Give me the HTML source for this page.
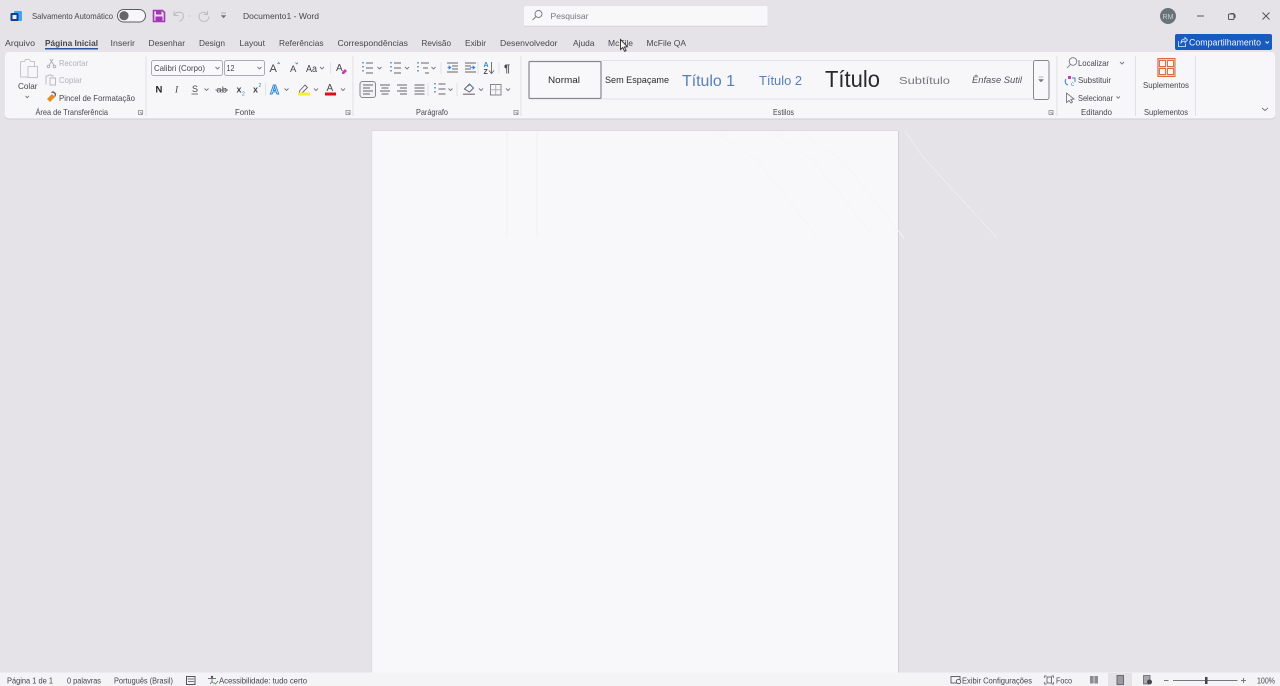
<!DOCTYPE html>
<html lang="pt-BR"><head><meta charset="utf-8"><title>Documento1 - Word</title>
<style>
html,body{margin:0;padding:0;background:#e6e3e8;overflow:hidden}
svg{display:block}
text{font-family:"Liberation Sans",sans-serif;font-size:8.5px;fill:#47464b}
.g{fill:#b3b1b6}
.n{fill:none;stroke:#77767b;stroke-width:.9}
.l{fill:none;stroke:#66656a;stroke-width:.9}
.b{fill:none;stroke:#2f86d0;stroke-width:1.4;stroke-dasharray:1.5 2.5}
.s{stroke:#e2e0e4;stroke-width:1;fill:none}
</style></head><body>
<svg xmlns="http://www.w3.org/2000/svg" width="1280" height="686" viewBox="0 0 1280 686">
<rect width="1280" height="686" fill="#e6e3e8"/>

<!-- title bar -->
<rect x="14" y="11" width="8" height="10" rx="1" fill="#41a5ee"/>
<rect x="10.500" y="13" width="8" height="8" rx="1" fill="#103f91"/>
<rect x="12.500" y="15" width="4" height="4" fill="#f0f0f5"/>
<text x="32" y="19" textLength="81" lengthAdjust="spacingAndGlyphs">Salvamento Automático</text>
<rect x="117.500" y="9.500" width="28" height="12.500" rx="6.200" fill="#f7f6f9" stroke="#5c5b60"/>
<circle cx="124" cy="15.700" r="4.600" fill="#66656a"/>
<path d="M153.500 10.500h9l2 2v9h-11z" fill="none" stroke="#a436b5" stroke-width="1.600"/>
<rect x="156" y="11" width="5.500" height="3.500" fill="#a436b5"/><rect x="155.500" y="16.500" width="7" height="4.500" fill="#a436b5"/>
<path d="M174 11v4.500h4.500M174.500 15c2-4 9-4 9 1 0 2.500-2 4.500-4 5.500" fill="none" stroke="#bdbbc0" stroke-width="1"/>
<path d="M188 16h3" stroke="#cfcdd2" stroke-width="1"/>
<path d="M207.500 11v3.500h-4M207 14c-2.500-3-8-2-8 2.500 0 3 2.500 5 5 5s5-2 5-5" fill="none" stroke="#bdbbc0" stroke-width="1"/>
<path d="M221 13h5M221 15.500l2.500 2.500 2.500-2.500z" fill="#77767b" stroke="#77767b" stroke-width=".5"/>
<text x="243" y="19" textLength="76" lengthAdjust="spacingAndGlyphs">Documento1  -  Word</text>

<!-- search -->
<rect x="524" y="6" width="243.500" height="20" rx="2" fill="#f8f7fa"/>
<path d="M524 26.200h243" stroke="#d5d3d8"/>
<circle cx="538.500" cy="14" r="3.500" class="n"/><path d="M536 16.500l-3.500 3.500" class="n"/>
<text x="550.500" y="19" textLength="38" lengthAdjust="spacingAndGlyphs" style="fill:#77767b">Pesquisar</text>

<!-- window controls -->
<circle cx="1168" cy="16" r="8" fill="#68737a"/>
<text x="1162.500" y="18.800" textLength="11" lengthAdjust="spacingAndGlyphs" style="font-size:7.500px;fill:#c9d0d4">RM</text>
<path d="M1197 16h7" stroke="#55545a"/>
<rect x="1228.500" y="14" width="5.500" height="5.500" rx="1" fill="none" stroke="#55545a"/>
<path d="M1230.500 13.500h3l1.500 1.500v3" fill="none" stroke="#55545a"/>
<path d="M1262.500 12.500l7 7M1269.500 12.500l-7 7" stroke="#55545a"/>

<!-- tabs -->
<g style="font-size:9px">
<text x="5" y="46" textLength="30" lengthAdjust="spacingAndGlyphs">Arquivo</text>
<text x="45" y="46" textLength="53" lengthAdjust="spacingAndGlyphs" style="font-weight:bold">Página Inicial</text>
<text x="110.500" y="46" textLength="24.500" lengthAdjust="spacingAndGlyphs">Inserir</text>
<text x="148.500" y="46" textLength="36.500" lengthAdjust="spacingAndGlyphs">Desenhar</text>
<text x="199" y="46" textLength="26" lengthAdjust="spacingAndGlyphs">Design</text>
<text x="239.500" y="46" textLength="25.500" lengthAdjust="spacingAndGlyphs">Layout</text>
<text x="279" y="46" textLength="44.500" lengthAdjust="spacingAndGlyphs">Referências</text>
<text x="337.500" y="46" textLength="70.500" lengthAdjust="spacingAndGlyphs">Correspondências</text>
<text x="421.500" y="46" textLength="29.500" lengthAdjust="spacingAndGlyphs">Revisão</text>
<text x="465" y="46" textLength="21" lengthAdjust="spacingAndGlyphs">Exibir</text>
<text x="500" y="46" textLength="57.500" lengthAdjust="spacingAndGlyphs">Desenvolvedor</text>
<text x="573" y="46" textLength="21.500" lengthAdjust="spacingAndGlyphs">Ajuda</text>
<text x="608" y="46" textLength="25" lengthAdjust="spacingAndGlyphs">McFile</text>
<text x="646.500" y="46" textLength="39.500" lengthAdjust="spacingAndGlyphs">McFile QA</text>
</g>
<rect x="45" y="48" width="53" height="1.500" fill="#2b579a"/>

<!-- share -->
<rect x="1175" y="34" width="97" height="16" rx="2" fill="#185abd"/>
<path d="M1178.500 41v5.500h7v-3M1181 43c0-3 2-4 4-4v-1.500l2.500 2.500-2.500 2.500V41c-1.500 0-3 .5-4 2z" fill="none" stroke="#e6edf8" stroke-width=".8"/>
<text x="1189" y="45.500" textLength="72" lengthAdjust="spacingAndGlyphs" style="font-size:9px;fill:#f0f3fa">Compartilhamento</text>
<path d="M1265.500 41.500l1.700 1.700 1.700-1.700" fill="none" stroke="#f0f3fa"/>

<!-- ribbon -->
<rect x="5" y="53" width="1270" height="66.500" rx="4" fill="#cfcdd2"/>
<rect x="5" y="52" width="1270" height="66.500" rx="4" fill="#f7f6f9"/>
<path d="M146 56v60M353 56v60M521 56v60M1057 56v60M1135.500 56v60M1195.500 56v60" class="s"/>
<path d="M330.500 62v12M265.500 83v13" class="s"/>
<path d="M441 62v12M478 62v12M499 62v12M428 83v13M457 83v13" class="s"/>

<!-- clipboard -->
<path d="M20.500 61.500h4l1-2h4l1 2h4v5M20.500 61.500v15.500h7" fill="none" stroke="#c6c4c9"/>
<rect x="28" y="66.500" width="9.500" height="11" fill="#f7f6f9" stroke="#c6c4c9"/>
<text x="18" y="89" textLength="19.500" lengthAdjust="spacingAndGlyphs">Colar</text>
<path d="M25.500 96l1.700 1.700 1.700-1.700" class="n"/>
<path d="M50 59l4 6.500M53 59l-4 6.500" stroke="#b3b1b6" fill="none"/><circle cx="48.500" cy="66.500" r="1.300" fill="none" stroke="#b3b1b6"/><circle cx="54.500" cy="66.500" r="1.300" fill="none" stroke="#b3b1b6"/>
<text class="g" x="59" y="66" textLength="29" lengthAdjust="spacingAndGlyphs">Recortar</text>
<path d="M46 84.500V76h2l1-1h2l1 1h2" fill="none" stroke="#bdbbc0"/><rect x="50" y="78" width="5.500" height="7" fill="none" stroke="#bdbbc0"/>
<text class="g" x="59" y="83" textLength="23" lengthAdjust="spacingAndGlyphs">Copiar</text>
<path d="M47 99l5-5 3 3-5 5z" fill="#e58b1f"/><path d="M51.500 92.500l2-.5 2 2-.5 2.500" fill="none" stroke="#5c5b60" stroke-width="1.300"/>
<text x="59" y="101" textLength="76" lengthAdjust="spacingAndGlyphs">Pincel de Formatação</text>
<text x="35.500" y="115" textLength="72.500" lengthAdjust="spacingAndGlyphs">Área de Transferência</text>
<path d="M138.500 110.500h4v4h-4zM140 112l2.500 2.500M142.500 112.500v2h-2" fill="none" stroke="#88878c" stroke-width=".8"/>
<path d="M346 110.500h4v4h-4zM347.500 112l2.500 2.500M350 112.500v2h-2" fill="none" stroke="#88878c" stroke-width=".8"/>
<path d="M514 110.500h4v4h-4zM515.500 112l2.500 2.500M518 112.500v2h-2" fill="none" stroke="#88878c" stroke-width=".8"/>
<path d="M1049 110.500h4v4h-4zM1050.500 112l2.500 2.500M1053 112.500v2h-2" fill="none" stroke="#88878c" stroke-width=".8"/>

<!-- font -->
<rect x="151.500" y="60.500" width="71" height="15" rx="2" fill="#f9f8fb" stroke="#aeacb2"/>
<rect x="224.500" y="60.500" width="40" height="15" rx="2" fill="#f9f8fb" stroke="#aeacb2"/>
<text x="154" y="71" textLength="51" lengthAdjust="spacingAndGlyphs">Calibri (Corpo)</text>
<text x="226.500" y="71" textLength="8" lengthAdjust="spacingAndGlyphs">12</text>
<text x="269.500" y="72" style="font-size:11px">A</text><path d="M277.500 64l1.200-1.500 1.200 1.500" fill="none" stroke="#2f86d0" stroke-width=".8"/>
<text x="290" y="72" style="font-size:9.500px">A</text><path d="M295.500 62.500l1.200 1.500 1.200-1.500" fill="none" stroke="#2f86d0" stroke-width=".8"/>
<text x="306" y="72" textLength="11" lengthAdjust="spacingAndGlyphs" style="font-size:10px">Aa</text>
<text x="336" y="71" style="font-size:10px">A</text><path d="M342 72l3-3 2 2-3 3h-2z" fill="#c33fb0"/>
<text x="155.500" y="92.500" style="font-weight:bold;font-size:9.500px;fill:#222">N</text>
<text x="175" y="92.500" style="font-style:italic;font-size:9.500px;font-family:'Liberation Serif',serif">I</text>
<text x="192" y="92" style="font-size:9px">S</text><path d="M191.500 94h6.500" stroke="#77767b"/>
<text x="216.500" y="92.500" textLength="10.500" lengthAdjust="spacingAndGlyphs" style="font-size:8px">ab</text><path d="M215.500 90h12.500" stroke="#66656a"/>
<text x="236.500" y="92.500" style="font-size:9px;font-weight:bold">x</text><text x="242" y="95.500" style="font-size:5px;fill:#2f86d0">2</text>
<text x="253" y="92.500" style="font-size:9px;font-weight:bold">x</text><text x="258.500" y="87" style="font-size:5px;fill:#2f86d0">2</text>
<text x="270" y="94" style="font-size:12.500px;font-weight:bold;fill:#fff;stroke:#2b88d8;stroke-width:1">A</text>
<path d="M299.500 91l5.500-6 2.500 2.500-5.500 5.500h-2.500z" fill="none" stroke="#66656a" stroke-width=".9"/>
<rect x="298" y="92.500" width="12" height="3" fill="#f8ee2b"/>
<text x="326.500" y="91" style="font-size:10px">A</text><rect x="325" y="92.500" width="11" height="3" fill="#e00c1c"/>

<!-- chevrons -->
<path class="n" d="M215.500 67l2 2 2-2M257.500 67l2 2 2-2M320 67l2 2 2-2M377.500 67l2 2 2-2M405 67l2 2 2-2M431.500 67l2 2 2-2M1120 62l2 2 2-2M204.500 88.500l2 2 2-2M284.500 88.500l2 2 2-2M314 88.500l2 2 2-2M341 88.500l2 2 2-2M448.500 88.500l2 2 2-2M479 88.500l2 2 2-2M506 88.500l2 2 2-2M1116.500 96.500l1.700 1.700 1.700-1.700M1262 108l3 2.500 3-2.500"/>

<!-- paragraph -->
<path class="b" d="M363 62v12M391 62v12M418 62v12M435 83v12"/>
<path class="l" d="M366 63h7M366 68h7M366 73h7M394 63h7M394 68h7M394 73h7M421 63h8M423 68h5M425 73h4M438.500 84h7M438.500 89h7M438.500 94h7"/>
<path class="l" d="M447 63h11M452 66h6M452 69h6M447 72h11M465 63h11M465 66h6M465 69h6M465 72h11"/>
<path d="M447.500 67.500l3 0M451 67.500l-2-1.500v3zM470 67.500h3M475 67.500l-2-1.500v3z" fill="#2f86d0" stroke="#2f86d0" stroke-width=".7"/>
<text x="483.500" y="67" style="font-size:7px;fill:#2f86d0;font-weight:bold">A</text>
<text x="483.500" y="74" style="font-size:7px;font-weight:bold">Z</text>
<path class="l" d="M491.500 62v11M489 70.500l2.500 3 2.500-3"/>
<text x="504" y="72" style="font-size:11px;font-weight:bold">¶</text>
<rect x="360" y="81.500" width="15.500" height="16" rx="2.500" fill="#f3f2f5" stroke="#88878c"/>
<path class="l" d="M363 85h10M363 88h7M363 91h10M363 94h7M380 85h10M381.500 88h7M380 91h10M381.500 94h7M397 85h10M400 88h7M397 91h10M400 94h7M414.500 85h10M414.500 88h10M414.500 91h10M414.500 94h10"/>
<path d="M464.500 89l5-5 4 4-4 4z" fill="none" stroke="#66656a"/><path d="M468 86l2-2" stroke="#2f86d0" stroke-width="1.400"/>
<rect x="463" y="93.500" width="12" height="1.500" fill="#8f8e93"/>
<rect x="490.500" y="84.500" width="10.500" height="10.500" fill="none" stroke="#88878c"/><path d="M495.700 84.500v10.500M490.500 89.700h10.500" stroke="#b3b1b6"/>
<text x="416" y="115" textLength="32" lengthAdjust="spacingAndGlyphs">Parágrafo</text>
<text x="235" y="115" textLength="20" lengthAdjust="spacingAndGlyphs">Fonte</text>

<!-- styles -->
<path d="M601 60.500h432M601 99h432" stroke="#e4e2e7"/>
<rect x="529" y="61.500" width="72" height="37" rx="1" fill="#f8f7fa" stroke="#88878c" stroke-width="1.200"/>
<text x="548" y="83" textLength="32" lengthAdjust="spacingAndGlyphs" style="font-size:9.500px;fill:#2a2a2c">Normal</text>
<text x="605" y="83" textLength="64" lengthAdjust="spacingAndGlyphs" style="font-size:9.500px;fill:#2a2a2c">Sem Espaçame</text>
<text x="682" y="86" textLength="53" lengthAdjust="spacingAndGlyphs" style="font-size:16px;fill:#5580b8">Título 1</text>
<text x="759" y="85" textLength="43" lengthAdjust="spacingAndGlyphs" style="font-size:13px;fill:#5580b8">Título 2</text>
<text x="825" y="87" textLength="55" lengthAdjust="spacingAndGlyphs" style="font-size:23px;fill:#2a2a2c">Título</text>
<text x="899" y="84" textLength="51" lengthAdjust="spacingAndGlyphs" style="font-size:10.500px;fill:#77767b">Subtítulo</text>
<text x="972" y="83" textLength="50" lengthAdjust="spacingAndGlyphs" style="font-size:9.500px;font-style:italic;fill:#55545a">Ênfase Sutil</text>
<rect x="1033.500" y="60.500" width="15.500" height="39" rx="2" fill="#f8f7fa" stroke="#88878c"/>
<path d="M1038.500 77h5M1038.500 79.500l2.500 2.500 2.500-2.500z" fill="#77767b" stroke="#77767b" stroke-width=".5"/>
<text x="773" y="115" textLength="21" lengthAdjust="spacingAndGlyphs">Estilos</text>

<!-- editing -->
<circle cx="1073" cy="61.500" r="3.800" class="n"/><path d="M1070.300 64.500l-3.300 3.500" class="n"/>
<text x="1078" y="66" textLength="31" lengthAdjust="spacingAndGlyphs">Localizar</text>
<rect x="1068" y="76" width="3" height="3" fill="#c33fb0"/>
<path d="M1066 79c-1.500 2-1 5 2 6M1072 78h3v4" fill="none" stroke="#2f86d0"/>
<text x="1071" y="86" style="font-size:6px;fill:#2f86d0">c</text>
<text x="1078" y="83" textLength="33" lengthAdjust="spacingAndGlyphs">Substituir</text>
<path d="M1066.500 93v9.500l2.500-2 2 2.500 1.500-1-1.500-2.500 3-.5z" class="n"/>
<text x="1078" y="101" textLength="35" lengthAdjust="spacingAndGlyphs">Selecionar</text>
<text x="1081" y="115" textLength="31" lengthAdjust="spacingAndGlyphs">Editando</text>

<!-- add-ins -->
<rect x="1157" y="58" width="18.500" height="19" fill="#dddbe0"/>
<rect x="1158" y="58.500" width="17" height="18" fill="none" stroke="#d9683c"/>
<path d="M1159.500 60.500h6v6h-6zM1167.500 60.500h6v6h-6zM1159.500 68.500h6v6h-6zM1167.500 68.500h6v6h-6z" fill="#f7f6f9" stroke="#d9683c" stroke-width=".9"/>
<text x="1143" y="88" textLength="46" lengthAdjust="spacingAndGlyphs">Suplementos</text>
<text x="1144" y="115" textLength="44" lengthAdjust="spacingAndGlyphs">Suplementos</text>

<!-- page -->
<rect x="372" y="130.500" width="526" height="542" fill="#f8f7fa"/>
<path d="M372 130.500h526" stroke="#dcdade"/>
<path d="M898.500 131v542" stroke="#d0ced3"/>
<path d="M371.700 131v542" stroke="#e0dee2"/>
<path d="M507 131v107M537 131v107" stroke="#f0eff2"/>
<path d="M714 131l43 29 61 78M770 131l43 29 62 78M798 131l44 29 62 78" stroke="#f5f4f7" fill="none"/>
<path d="M905 131l17 25 75 82" stroke="#f0eff2" fill="none" stroke-width=".8"/>

<!-- status bar -->
<rect x="0" y="672.500" width="1280" height="13.500" fill="#f4f3f6"/>
<text x="7" y="683.500" textLength="46" lengthAdjust="spacingAndGlyphs" style="font-size:8px">Página 1 de 1</text>
<text x="67" y="683.500" textLength="34" lengthAdjust="spacingAndGlyphs" style="font-size:8px">0 palavras</text>
<text x="114" y="683.500" textLength="59" lengthAdjust="spacingAndGlyphs" style="font-size:8px">Português (Brasil)</text>
<rect x="186.500" y="676.500" width="8.500" height="8" fill="none" stroke="#55545a"/><path d="M187.500 679h6.500M188 681.500h6" stroke="#77767b"/>
<circle cx="212" cy="677" r="1.200" fill="#55545a"/><path d="M208 678.500h8M212 678.500v3l-2 2.500M212 681.500l1.500 2" class="n" stroke-width=".8"/><path d="M214 682.500l1.500 1.500 2.500-3" fill="none" stroke="#4a8a50" stroke-width=".8"/>
<text x="219" y="683.500" textLength="88" lengthAdjust="spacingAndGlyphs" style="font-size:8px">Acessibilidade: tudo certo</text>
<rect x="951" y="676.500" width="9" height="6.500" fill="none" stroke="#55545a" stroke-width=".9"/><circle cx="958.500" cy="681.500" r="2.200" fill="#f4f3f6" stroke="#55545a" stroke-width=".9"/>
<text x="962" y="683.500" textLength="70" lengthAdjust="spacingAndGlyphs" style="font-size:8px">Exibir Configurações</text>
<path d="M1044.500 678v-2h2M1051.500 676h2v2M1053.500 682v2h-2M1046.500 684h-2v-2" class="n" stroke-width=".9"/><rect x="1047" y="677" width="4.500" height="6" fill="none" stroke="#55545a" stroke-width=".8"/>
<text x="1056" y="683.500" textLength="16" lengthAdjust="spacingAndGlyphs" style="font-size:8px">Foco</text>
<rect x="1090" y="676" width="8" height="7.500" fill="#8e8d92"/><path d="M1094 676v7.500" stroke="#f4f3f6" stroke-width=".7"/>
<rect x="1108" y="673" width="24" height="13" fill="#e3e1e5"/>
<rect x="1117" y="675.500" width="6.500" height="9" fill="#9b9a9f" stroke="#55545a" stroke-width=".8"/>
<rect x="1143.500" y="675.500" width="6.500" height="8.500" fill="#a8a7ac" stroke="#66656a" stroke-width=".8"/><circle cx="1149.500" cy="682" r="2.500" fill="#45444a"/>
<path d="M1164 680.500h4.500M1173 680.500h64.500M1241 680.500h5M1243.500 678v5" stroke="#77767b"/>
<rect x="1205" y="677" width="2.500" height="7" fill="#45444a"/>
<text x="1257" y="683.500" textLength="18" lengthAdjust="spacingAndGlyphs" style="font-size:8px">100%</text>

<!-- cursor -->
<path d="M620.500 39.500v10l2.300-2 1.700 3.800 1.600-.7-1.700-3.600 3-.2z" fill="#f8f8f8" stroke="#2a2a2c" stroke-width=".9"/>
</svg>
</body></html>
